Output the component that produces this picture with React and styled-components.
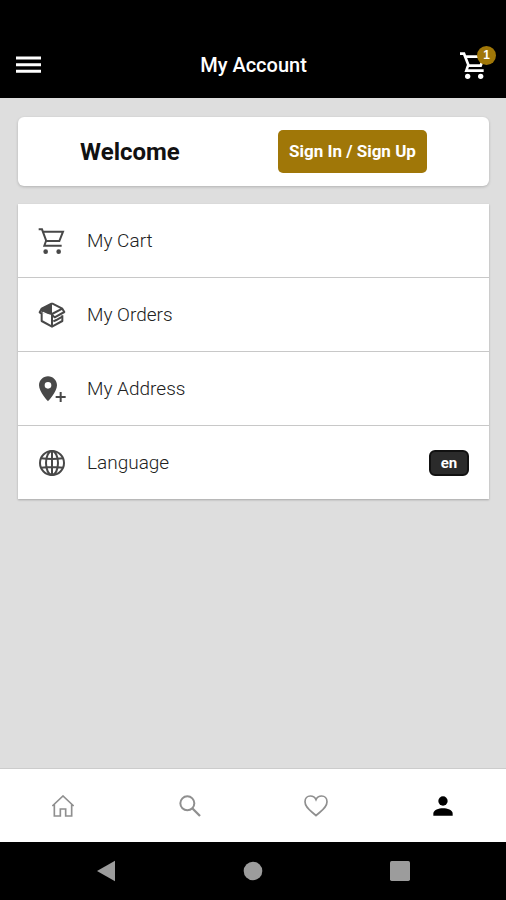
import styled, { createGlobalStyle } from 'styled-components'

const GlobalStyle = createGlobalStyle`
  * {
    box-sizing: border-box;
  }

  body {
    margin: 0;
    background: #dedede;
    color: #111;
    font-family: Roboto, 'Noto Sans', sans-serif;
  }
`

const Page = styled.div`
  display: flex;
  flex-direction: column;
  min-height: 100vh;
`

const Header = styled.header`
  display: grid;
  grid-template-columns: 32px 1fr 32px;
  align-items: center;
  padding: 44px 15px 12px 16px;
  height: 98px;
  background: #000;
  color: #fff;
`

const Title = styled.h1`
  margin: 0;
  font-size: 20px;
  line-height: 28px;
  font-weight: 500;
  text-align: center;
`

const IconButton = styled.button`
  display: flex;
  position: relative;
  justify-self: start;
  padding: 0;
  border: 0;
  background: none;
  color: inherit;
  cursor: pointer;
`

const CartCount = styled.span`
  position: absolute;
  top: -6px;
  right: -11px;
  width: 19px;
  height: 19px;
  border-radius: 50%;
  background: #a07708;
  font-size: 12px;
  line-height: 19px;
  font-weight: 700;
  text-align: center;
`

const Main = styled.main`
  display: flex;
  flex-direction: column;
  flex: 1;
  gap: 18px;
  padding: 19px 17px 18px 18px;
`

const WelcomeCard = styled.section`
  display: flex;
  align-items: center;
  justify-content: space-around;
  padding: 13px;
  border-radius: 6px;
  background: #fff;
  box-shadow: 0 1px 3px rgba(0, 0, 0, 0.2);
`

const WelcomeText = styled.h2`
  margin: 0;
  font-size: 24px;
  line-height: 28px;
  font-weight: 700;
`

const SignInButton = styled.button`
  padding: 8px 11px;
  border: 0;
  border-radius: 5px;
  background: #a07708;
  color: #fff;
  font-family: inherit;
  font-size: 17px;
  line-height: 27px;
  font-weight: 700;
  cursor: pointer;
`

const Menu = styled.ul`
  margin: 0;
  padding: 0;
  list-style: none;
  background: #fff;
  box-shadow: 0 1px 2px rgba(0, 0, 0, 0.25);
`

const MenuItem = styled.li`
  & + & {
    border-top: 1px solid #c8c8c8;
  }
`

const MenuLink = styled.a`
  display: flex;
  align-items: center;
  gap: 21px;
  height: 73px;
  padding: 0 20px;
  color: #222;
  font-size: 19px;
  line-height: 28px;
  font-weight: 300;
  text-decoration: none;

  svg {
    color: #484848;
  }
`

const LanguageTag = styled.span`
  margin-left: auto;
  width: 40px;
  border: 2px solid #111;
  border-radius: 6px;
  background: #2b2b2b;
  color: #fff;
  font-size: 15px;
  line-height: 22px;
  font-weight: 700;
  text-align: center;
`

const TabBar = styled.nav`
  display: grid;
  grid-template-columns: repeat(4, 1fr);
  height: 74px;
  border-top: 1px solid #ccc;
  background: #fff;
`

const Tab = styled.a`
  display: flex;
  align-items: center;
  justify-content: center;
  color: ${(props) => (props.$active ? '#000' : '#8f8f8f')};
`

const SystemBar = styled.div`
  display: grid;
  grid-template-columns: repeat(3, 1fr);
  height: 58px;
  padding: 0 32px;
  background: #000;
  color: #9c9c9c;
`

const SystemButton = styled.button`
  display: flex;
  align-items: center;
  justify-content: center;
  padding: 0;
  border: 0;
  background: none;
  color: inherit;
`

// icon paths are drawn on a grid of 3 units per pixel
const Icon = ({ width = 28, height = 26, children }) => (
  <svg
    width={width}
    height={height}
    viewBox={`0 0 ${width * 3} ${height * 3}`}
    fill="none"
    stroke="currentColor"
    strokeWidth="6"
    aria-hidden="true"
  >
    {children}
  </svg>
)

const MenuIcon = () => (
  <Icon width={25} height={18}>
    <path d="M0 6h75M0 26h75M0 46h75" strokeWidth="9" />
  </Icon>
)

const HeaderCartIcon = () => (
  <Icon width={26} height={27}>
    <path d="M3 5h12l14 36h36l10-27H17M27 41l-5 15h52" strokeWidth="8" />
    <circle cx="26" cy="73" r="8" fill="currentColor" stroke="none" />
    <circle cx="65" cy="73" r="8" fill="currentColor" stroke="none" />
  </Icon>
)

const CartIcon = () => (
  <Icon>
    <path d="M2 4h10l13 35h39L75 11H14M24 39l-5 14h52" />
    <circle cx="23" cy="71" r="7" fill="currentColor" stroke="none" />
    <circle cx="62" cy="71" r="7" fill="currentColor" stroke="none" />
  </Icon>
)

const BoxIcon = () => (
  <Icon>
    <path
      d="M42 4L11 20L5 31L11 35V57L42 74L73 57V40M42 4L73 20L79 30L50 46L42 38V74M73 20L42 36"
      strokeLinejoin="round"
    />
    <path d="M42 4L8 20L11 33L42 39Z" fill="currentColor" stroke="none" />
    <path d="M46 58L55 54L73 44" />
    <path d="M37 12L20 21L37 30Z" fill="currentColor" fillOpacity="0.6" stroke="none" />
    <path d="M14 31L34 40" stroke="#fff" strokeWidth="4" />
  </Icon>
)

const AddressIcon = () => (
  <Icon>
    <path
      d="M30 1C15 1 3 13 3 28c0 20 27 48 27 48s27-28 27-48C57 13 45 1 30 1Zm0 17a10 10 0 1 1 0 20a10 10 0 0 1 0-20Z"
      fill="currentColor"
      fillRule="evenodd"
      stroke="none"
    />
    <path d="M53 63h30M68 48v30" />
  </Icon>
)

const GlobeIcon = () => (
  <Icon>
    <circle cx="42" cy="39" r="36" />
    <ellipse cx="42" cy="39" rx="18" ry="36" />
    <path d="M42 3v72M9 25q33 4 66 0M9 53q33-4 66 0" />
  </Icon>
)

const HomeIcon = () => (
  <Icon width={22} height={22}>
    <path d="M1 33L33 3l32 30M7 28v35h18V42h16v21h18V28" strokeWidth="5" />
  </Icon>
)

const SearchIcon = () => (
  <Icon width={22} height={22}>
    <circle cx="25" cy="25" r="21" />
    <path d="M39 39l24 24" strokeWidth="7" />
  </Icon>
)

const HeartIcon = () => (
  <Icon width={24} height={22}>
    <path
      d="M36 62C20 47 3 38 3 20C3 10 10 3 19 3c7 0 14 4 17 11C39 7 46 3 53 3c9 0 16 7 16 17c0 18-17 27-33 42Z"
      strokeWidth="5"
    />
  </Icon>
)

const PersonIcon = () => (
  <Icon width={20} height={20}>
    <g fill="currentColor" stroke="none">
      <circle cx="30" cy="15" r="14" />
      <path d="M1 59v-6c0-11 16-16 29-16s29 5 29 16v6Z" />
    </g>
  </Icon>
)

const menuItems = [
  { label: 'My Cart', icon: CartIcon },
  { label: 'My Orders', icon: BoxIcon },
  { label: 'My Address', icon: AddressIcon },
  { label: 'Language', icon: GlobeIcon, tag: 'en' },
]

const tabs = [
  { label: 'Home', icon: HomeIcon },
  { label: 'Search', icon: SearchIcon },
  { label: 'Favorites', icon: HeartIcon },
  { label: 'Account', icon: PersonIcon, active: true },
]

const App = () => {
  return (
    <Page>
      <GlobalStyle />
      <Header>
        <IconButton aria-label="Menu">
          <MenuIcon />
        </IconButton>
        <Title>My Account</Title>
        <IconButton aria-label="Cart">
          <HeaderCartIcon />
          <CartCount>1</CartCount>
        </IconButton>
      </Header>
      <Main>
        <WelcomeCard>
          <WelcomeText>Welcome</WelcomeText>
          <SignInButton>Sign In / Sign Up</SignInButton>
        </WelcomeCard>
        <Menu>
          {menuItems.map(({ label, icon: ItemIcon, tag }) => (
            <MenuItem key={label}>
              <MenuLink href="#">
                <ItemIcon />
                {label}
                {tag && <LanguageTag>{tag}</LanguageTag>}
              </MenuLink>
            </MenuItem>
          ))}
        </Menu>
      </Main>
      <TabBar>
        {tabs.map(({ label, icon: TabIcon, active }) => (
          <Tab key={label} href="#" $active={active} aria-label={label}>
            <TabIcon />
          </Tab>
        ))}
      </TabBar>
      <SystemBar>
        <SystemButton aria-label="Back">
          <Icon width={18} height={22}>
            <path d="M0 33L54 2v62Z" fill="currentColor" stroke="none" />
          </Icon>
        </SystemButton>
        <SystemButton aria-label="Home screen">
          <Icon width={20} height={20}>
            <circle cx="30" cy="30" r="28" fill="currentColor" stroke="none" />
          </Icon>
        </SystemButton>
        <SystemButton aria-label="Recent apps">
          <Icon width={20} height={20}>
            <rect width="60" height="60" rx="5" fill="currentColor" stroke="none" />
          </Icon>
        </SystemButton>
      </SystemBar>
    </Page>
  )
}

export default App
